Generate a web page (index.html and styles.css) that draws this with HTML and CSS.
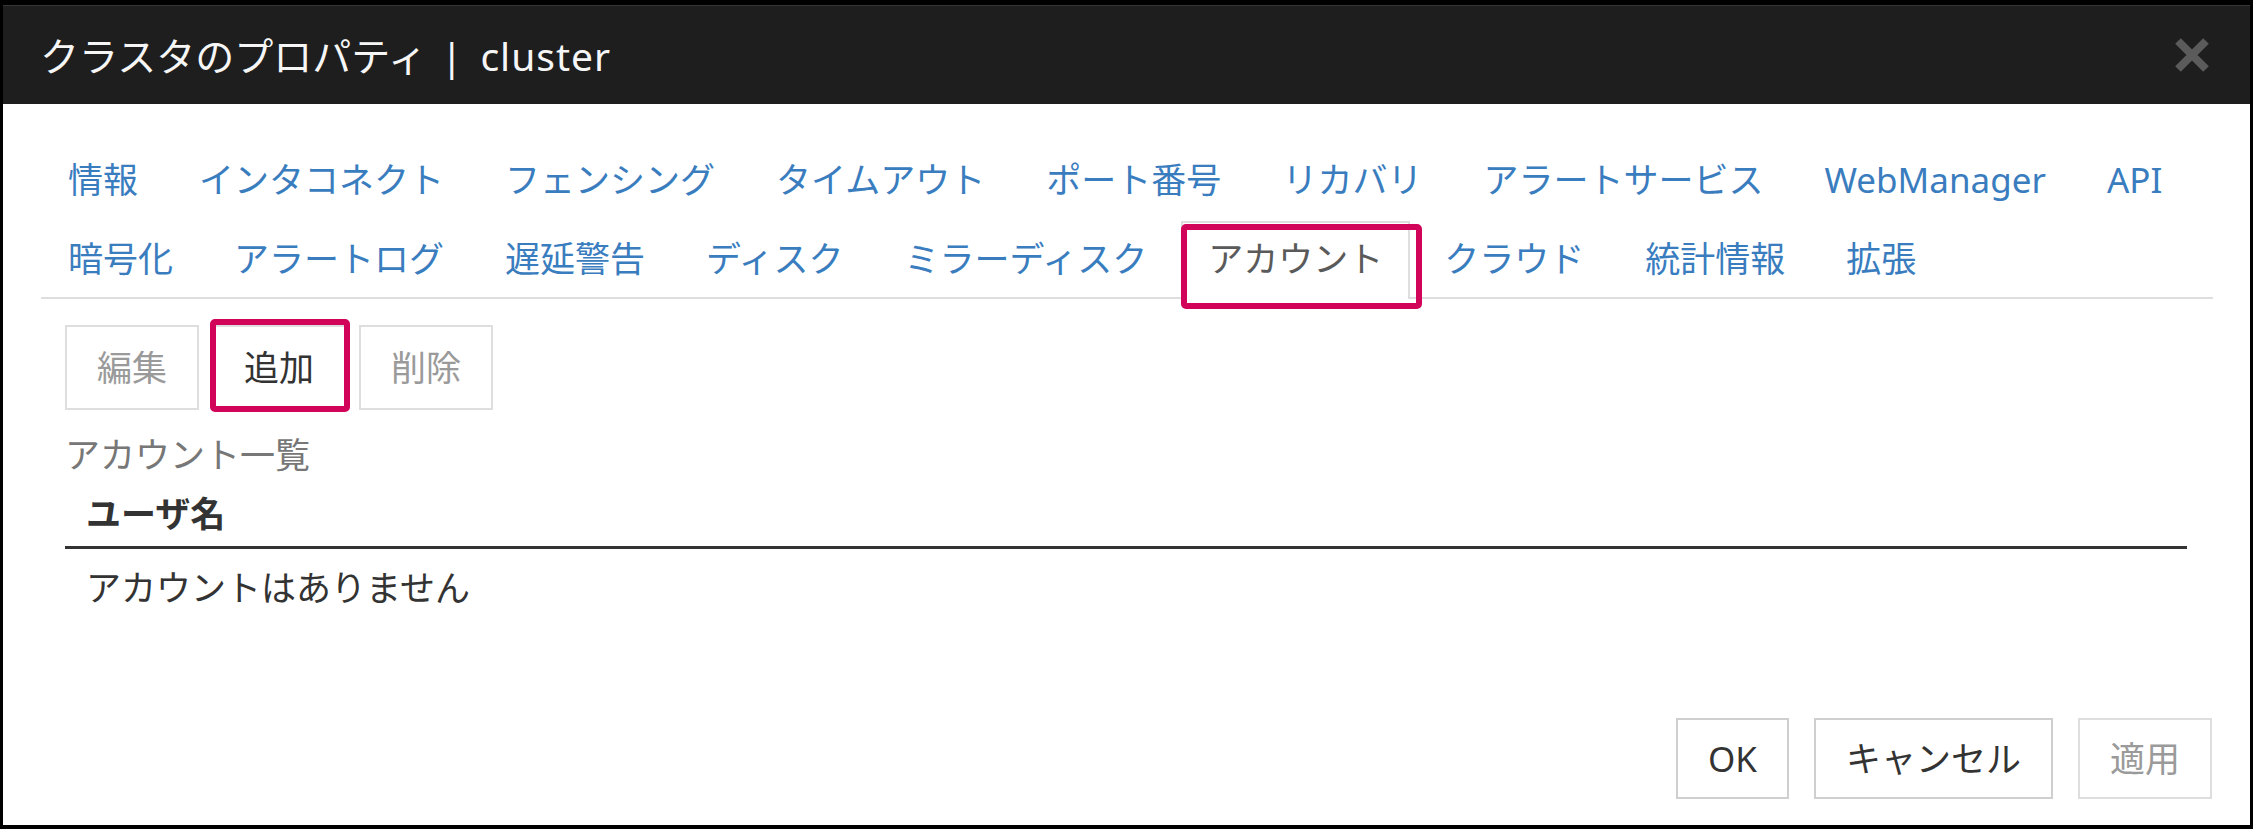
FILE: index.html
```html
<!DOCTYPE html>
<html lang="ja">
<head>
<meta charset="utf-8">
<title>クラスタのプロパティ</title>
<link rel="stylesheet" href="styles.css">
</head>
<body>
<div class="dialog">
  <div class="titlebar">
    <span class="title">クラスタのプロパティ<span class="sep">|</span><span class="name">cluster</span></span>
    <span class="close"><svg width="36" height="36" viewBox="0 0 36 36"><path d="M4 4L32 32M32 4L4 32" stroke="#5b5b5b" stroke-width="8" fill="none"/></svg></span>
  </div>
  <div class="content">
    <ul class="tabs">
      <li class="tab">情報</li>
      <li class="tab">インタコネクト</li>
      <li class="tab">フェンシング</li>
      <li class="tab">タイムアウト</li>
      <li class="tab">ポート番号</li>
      <li class="tab">リカバリ</li>
      <li class="tab">アラートサービス</li>
      <li class="tab">WebManager</li>
      <li class="tab">API</li>
      <li class="tab">暗号化</li>
      <li class="tab">アラートログ</li>
      <li class="tab">遅延警告</li>
      <li class="tab">ディスク</li>
      <li class="tab">ミラーディスク</li>
      <li class="tab active">アカウント<span class="mark mark-tab"></span></li>
      <li class="tab">クラウド</li>
      <li class="tab">統計情報</li>
      <li class="tab">拡張</li>
    </ul>
    <div class="panel">
      <div class="toolbar">
        <button class="btn" disabled>編集</button>
        <button class="btn">追加<span class="mark mark-btn"></span></button>
        <button class="btn" disabled>削除</button>
      </div>
      <div class="caption">アカウント一覧</div>
      <table class="list">
        <thead><tr><th>ユーザ名</th></tr></thead>
        <tbody><tr><td>アカウントはありません</td></tr></tbody>
      </table>
    </div>
  </div>
  <div class="footer">
    <button class="btn fbtn strong">OK</button>
    <button class="btn fbtn strong">キャンセル</button>
    <button class="btn fbtn" disabled>適用</button>
  </div>
</div>
</body>
</html>
```

FILE: styles.css
```css
html, body {
  margin: 0;
  padding: 0;
  height: 100%;
}
body {
  background: #000;
  font-family: "Noto Sans", "Noto Sans CJK JP", sans-serif;
  overflow: hidden;
}
.dialog {
  margin: 5px 3px 0 3px;
  height: 820px;
  background: #fff;
  display: flex;
  flex-direction: column;
}
.titlebar {
  height: 99px;
  box-sizing: border-box;
  background: #1e1e1e;
  border-top: 1px solid #363636;
  display: flex;
  align-items: center;
  justify-content: space-between;
  padding: 0 40px 0 37px;
}
.title {
  color: #f6f6f6;
  font-size: 39px;
  line-height: 1;
  white-space: nowrap;
}
.sep {
  margin: 0 18px 0 14px;
}
.name {
  letter-spacing: 1px;
}
.close {
  display: flex;
  width: 36px;
  height: 36px;
}
.content {
  flex: 1;
}
.tabs {
  list-style: none;
  margin: 0 37px 0 38px;
  padding: 38px 0 0;
  display: flex;
  flex-wrap: wrap;
  column-gap: 7px;
  row-gap: 3px;
  border-bottom: 2px solid #dedede;
}
.tab {
  position: relative;
  box-sizing: border-box;
  height: 76px;
  line-height: 72px;
  padding: 0 25px;
  border: 2px solid transparent;
  border-bottom: 0;
  color: #3a7dbf;
  font-size: 35px;
  white-space: nowrap;
}
.tab.active {
  color: #5a5a5a;
  background: #fff;
  border-color: #dedede;
  height: 78px;
  margin-bottom: -2px;
}
.mark {
  position: absolute;
  border: 6px solid #d2045a;
  border-radius: 5px;
  pointer-events: none;
}
.mark-tab {
  top: 1px;
  left: -2px;
  right: -14px;
  bottom: -10px;
}
.panel {
  padding: 26px 63px 0 62px;
}
.toolbar {
  display: flex;
  gap: 13px;
}
.btn {
  position: relative;
  box-sizing: border-box;
  height: 85px;
  padding: 0 30px;
  border: 2px solid #dedede;
  background: #fff;
  color: #333;
  font-family: inherit;
  font-size: 35px;
  line-height: 1;
  margin: 0;
}
.btn:disabled {
  color: #9a9a9a;
}
.mark-btn {
  top: -8px;
  left: -4px;
  right: -6px;
  bottom: -4px;
}
.caption {
  margin-top: 20px;
  line-height: 50px;
  font-size: 35px;
  color: #777;
}
.list {
  width: 100%;
  border-collapse: collapse;
  font-size: 35px;
  color: #333;
}
.list th {
  text-align: left;
  font-weight: bold;
  height: 66px;
  padding: 0 0 0 21px;
  border-bottom: 3px solid #333;
  line-height: 1;
}
.list td {
  height: 76px;
  padding: 0 0 0 21px;
  line-height: 1;
}
.footer {
  display: flex;
  justify-content: flex-end;
  gap: 25px;
  padding: 0 38px 26px 0;
}
.fbtn {
  height: 81px;
}
.fbtn.strong {
  border-color: #cfcfcf;
}
```
